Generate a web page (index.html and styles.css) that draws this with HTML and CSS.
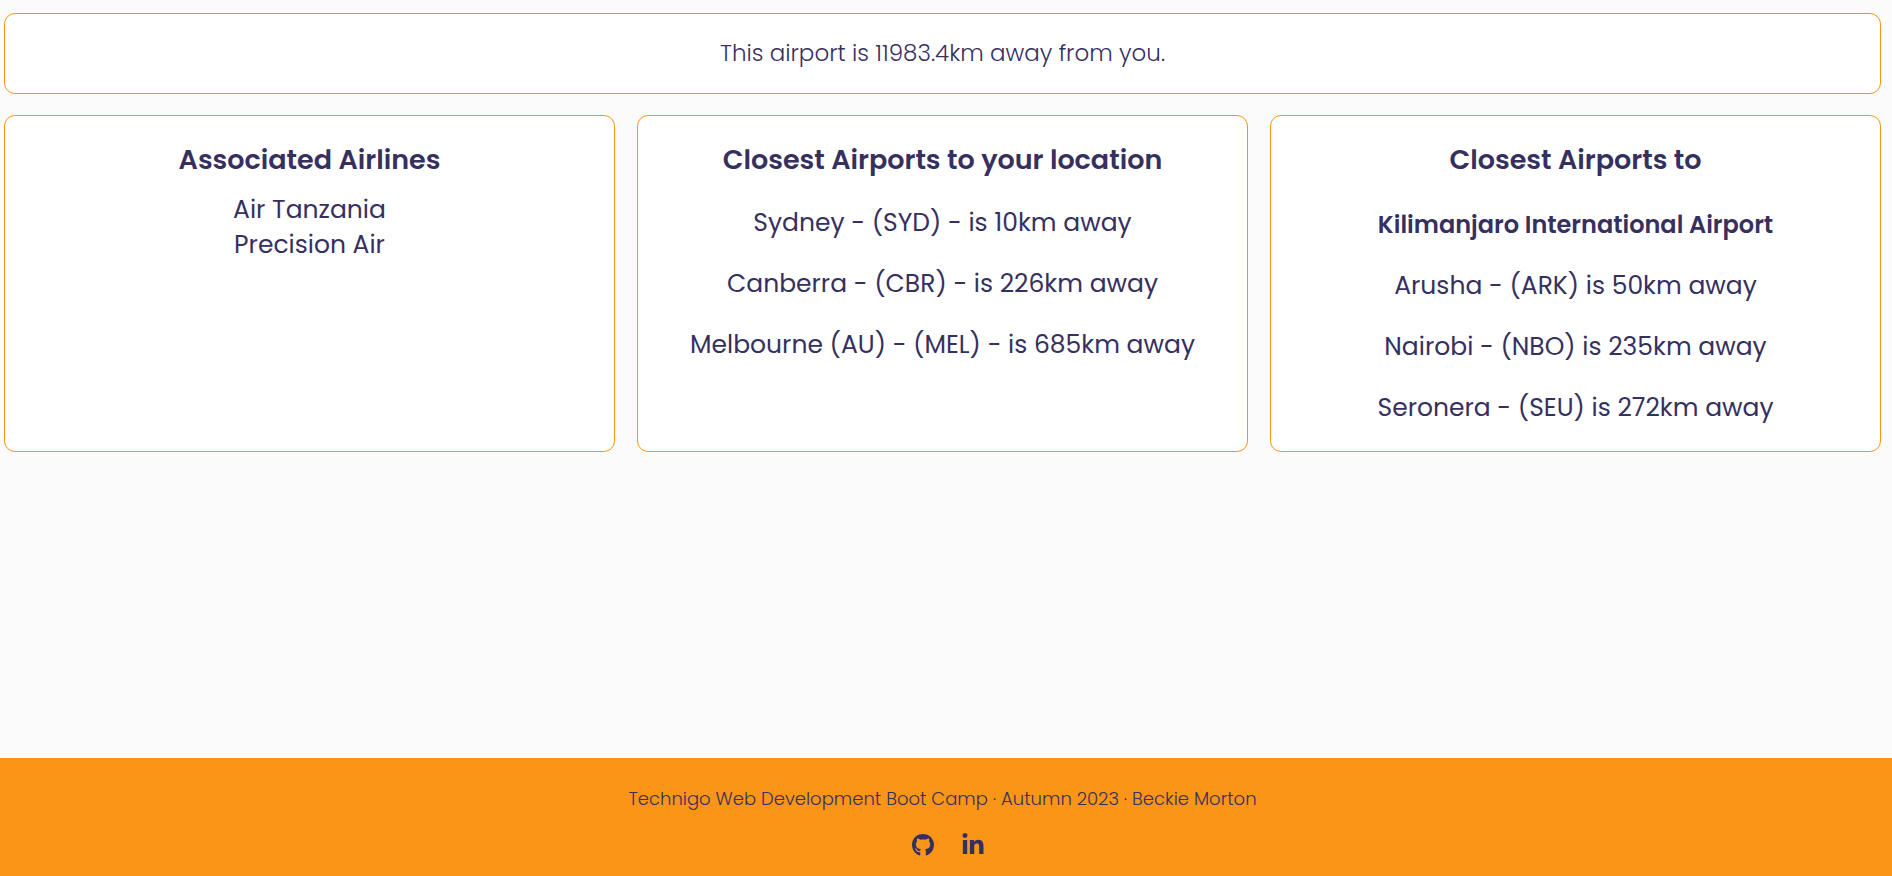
FILE: index.html
```html
<!DOCTYPE html>
<html lang="en">
<head>
<meta charset="utf-8">
<meta name="viewport" content="width=device-width, initial-scale=1">
<title>Kilimanjaro International Airport</title>
<link rel="stylesheet" href="styles.css">
</head>
<body>
<main class="content">
  <section class="card distance">
    <p class="distance-text">This airport is 11983.4km away from you.</p>
  </section>
  <div class="cards">
    <section class="card">
      <h2 class="card-title">Associated Airlines</h2>
      <ul class="airlines">
        <li>Air Tanzania</li>
        <li>Precision Air</li>
      </ul>
    </section>
    <section class="card">
      <h2 class="card-title">Closest Airports to your location</h2>
      <p class="airport">Sydney - (SYD) - is 10km away</p>
      <p class="airport">Canberra - (CBR) - is 226km away</p>
      <p class="airport">Melbourne (AU) - (MEL) - is 685km away</p>
    </section>
    <section class="card">
      <h2 class="card-title">Closest Airports to</h2>
      <h3 class="card-subtitle">Kilimanjaro International Airport</h3>
      <p class="airport">Arusha - (ARK) is 50km away</p>
      <p class="airport">Nairobi - (NBO) is 235km away</p>
      <p class="airport">Seronera - (SEU) is 272km away</p>
    </section>
  </div>
</main>
<footer class="footer">
  <p class="footer-text">Technigo Web Development Boot Camp · Autumn 2023 · Beckie Morton</p>
  <nav class="social">
    <a href="#github" aria-label="GitHub"><svg class="icon" viewBox="0 0 496 512"><path d="M165.900 397.400c0 2-2.300 3.600-5.200 3.600-3.300.3-5.600-1.300-5.600-3.600 0-2 2.300-3.600 5.200-3.600 3-.3 5.600 1.300 5.600 3.600zm-31.100-4.500c-.7 2 1.300 4.300 4.300 4.900 2.600 1 5.600 0 6.200-2s-1.300-4.300-4.300-5.200c-2.600-.7-5.500.3-6.200 2.300zm44.200-1.700c-2.900.7-4.900 2.600-4.600 4.900.3 2 2.900 3.300 5.900 2.600 2.900-.7 4.900-2.600 4.600-4.600-.3-1.900-3-3.200-5.900-2.900zM244.800 8C106.100 8 0 113.300 0 252c0 110.900 69.800 205.800 169.500 239.200 12.800 2.300 17.300-5.600 17.300-12.100 0-6.200-.3-40.400-.3-61.400 0 0-70 15-84.700-29.800 0 0-11.400-29.100-27.800-36.600 0 0-22.900-15.700 1.600-15.400 0 0 24.900 2 38.600 25.800 21.900 38.600 58.600 27.500 72.900 20.900 2.300-16 8.800-27.100 16-33.700-55.900-6.200-112.300-14.300-112.300-110.500 0-27.500 7.600-41.300 23.600-58.900-2.600-6.500-11.100-33.300 2.600-67.900 20.900-6.500 69 27 69 27 20-5.600 41.500-8.500 62.800-8.500s42.800 2.900 62.800 8.500c0 0 48.100-33.600 69-27 13.700 34.700 5.200 61.400 2.600 67.900 16 17.700 25.800 31.500 25.800 58.900 0 96.500-58.900 104.200-114.800 110.500 9.200 7.900 17 22.900 17 46.400 0 33.700-.3 75.400-.3 83.600 0 6.500 4.600 14.400 17.300 12.100C428.200 457.800 496 362.900 496 252 496 113.300 383.500 8 244.800 8z"/></svg></a>
    <a href="#linkedin" aria-label="LinkedIn"><svg class="icon" viewBox="0 0 448 512"><path d="M100.280 448H7.400V148.900h92.880zM53.790 108.100C24.090 108.100 0 83.500 0 53.800a53.790 53.790 0 0 1 107.580 0c0 29.700-24.100 54.300-53.790 54.300zM447.900 448h-92.680V302.400c0-34.700-.7-79.200-48.290-79.200-48.290 0-55.690 37.700-55.690 76.700V448h-92.780V148.900h89.080v40.800h1.300c12.400-23.500 42.690-48.300 87.880-48.300 94 0 111.280 61.900 111.280 142.300V448z"/></svg></a>
  </nav>
</footer>
</body>
</html>
```
FILE: styles.css
```css
* {
  box-sizing: border-box;
}

body {
  display: flex;
  flex-direction: column;
  min-height: 100vh;
  margin: 0;
  background: #fbfbfb;
  color: #36305f;
  font-family: Poppins, Inter, "Open Sans", sans-serif;
  font-weight: 300;
  text-align: center;
}

.content {
  flex: 1;
  padding: 13px 11px 22px 4px;
}

.card {
  border: 1px solid #fb9517;
  border-radius: 11px;
  background: #fff;
}

.distance {
  margin-bottom: 21px;
  padding: 22px;
}

.distance-text {
  margin: 0;
  font-size: 23px;
  line-height: 35px;
}

.cards {
  display: grid;
  grid-template-columns: repeat(3, 1fr);
  gap: 22px;
}

.cards .card {
  padding-top: 22px;
}

.card-title {
  margin: 0;
  font-size: 27px;
  font-weight: 600;
  line-height: 43px;
}

.card-subtitle {
  margin: 26px 0;
  font-size: 24px;
  font-weight: 600;
  line-height: 35px;
}

.airlines {
  margin: 11px 0 0;
  padding: 0;
  list-style: none;
  font-size: 25px;
  font-weight: 400;
  line-height: 35px;
}

.airport {
  margin: 26px 0;
  font-size: 25px;
  font-weight: 400;
  line-height: 35px;
}

.card-title + .airport {
  margin-top: 24px;
}

.footer {
  padding: 28px 7px 19px 0;
  background: #fb9517;
}

.footer-text {
  margin: 0;
  font-size: 18px;
  line-height: 26px;
}

.social {
  display: flex;
  justify-content: center;
  gap: 28px;
  margin-top: 21px;
  padding-left: 10px;
}

.social a {
  display: block;
  color: inherit;
}

.icon {
  display: block;
  width: 22px;
  height: 24px;
  fill: currentColor;
}
```
